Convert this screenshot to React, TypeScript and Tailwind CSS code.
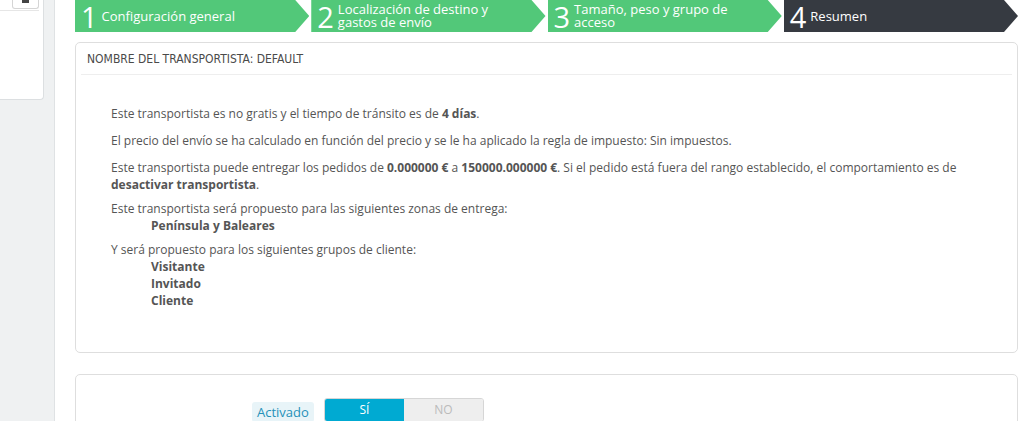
import React from "react";

const steps = [
  { num: "1", label: "Configuración general", done: true },
  { num: "2", label: "Localización de destino y gastos de envío", done: true },
  { num: "3", label: "Tamaño, peso y grupo de acceso", done: true },
  { num: "4", label: "Resumen", done: false },
];

const arrow = "[clip-path:polygon(0_0,calc(100%-14px)_0,100%_50%,calc(100%-14px)_100%,0_100%)]";

function Steps() {
  return (
    <div className="flex h-[32px] gap-[2px]">
      {steps.map((s) => (
        <div
          key={s.num}
          className={`flex flex-1 items-center pl-[6px] pr-[20px] text-white ${arrow} ${
            s.done ? "bg-[#52c879]" : "bg-[#363a41]"
          }`}
        >
          <span className="text-[29px] leading-[30px] font-normal mr-[4px] mt-[2px]">{s.num}</span>
          <span className="text-[13px] leading-[13px]">{s.label}</span>
        </div>
      ))}
    </div>
  );
}

export default function App() {
  return (
    <div
      className="flex h-[421px] w-[1034px] overflow-hidden bg-white text-[#555]"
      style={{ fontFamily: '"Open Sans", "Noto Sans", sans-serif' }}
    >
      {/* left column */}
      <div className="w-[55px] shrink-0 bg-[#eff1f2] border-r border-[#dfe2e4]">
        <div className="h-[100px] w-[44px] bg-white border-r border-b border-[#dcdfe1] rounded-br-[4px]">
          <div className="flex h-[11px] border-b border-[#e6e6e6] mr-[4px]">
            <div className="ml-[12px] w-[28px] h-[9px] border border-t-0 border-[#d5d5d5] rounded-b-[3px] flex justify-center">
              <div className="w-[7px] h-[3px] bg-[#444]" />
            </div>
          </div>
        </div>
      </div>

      {/* main */}
      <div className="flex-1 pl-[20px] pr-[16px]">
        <Steps />

        <div className="mt-[10px] h-[311px] border border-[#dedede] rounded-[5px] bg-white">
          <div className="mx-[5px] h-[32px] border-b border-[#eeeeee] flex items-center pl-[6px]">
            <h3
              className="text-[12px] uppercase text-[#4a4a4a]"
              style={{ fontFamily: '"DejaVu Sans Condensed", "DejaVu Sans", sans-serif', fontStretch: "condensed" }}
            >
              Nombre del transportista: Default
            </h3>
          </div>

          <div className="pl-[35px] pr-[30px] pt-[30px] text-[12px] leading-[17px]">
            <p className="mb-[10px]">
              Este transportista es no gratis y el tiempo de tránsito es de <b>4 días</b>.
            </p>
            <p className="mb-[10px]">
              El precio del envío se ha calculado en función del precio y se le ha aplicado la regla de impuesto: Sin impuestos.
            </p>
            <p className="mb-[7px]">
              Este transportista puede entregar los pedidos de <b>0.000000 €</b> a <b>150000.000000 €</b>. Si el pedido está fuera del rango establecido, el comportamiento es de <b>desactivar transportista</b>.
            </p>
            <p className="mb-[7px]">
              Este transportista será propuesto para las siguientes zonas de entrega:
              <br />
              <b className="pl-[40px] inline-block">Península y Baleares</b>
            </p>
            <p>
              Y será propuesto para los siguientes grupos de cliente:
            </p>
            <ul className="pl-[40px] font-bold">
              <li>Visitante</li>
              <li>Invitado</li>
              <li>Cliente</li>
            </ul>
          </div>
        </div>

        <div className="mt-[21px] h-[80px] border border-[#dedede] rounded-[5px] bg-white">
          <div className="flex items-start pt-[23px] pl-[176px]">
            <span className="mt-[4px] px-[5px] h-[20px] leading-[20px] rounded-[3px] bg-[#e8f4f8] text-[#2591b8] text-[13px]">
              Activado
            </span>
            <div className="ml-[10px] flex h-[24px] w-[160px] rounded-[3px] overflow-hidden border border-[#d6d6d6]">
              <div className="flex-1 bg-[#00aad2] text-white text-[12px] flex items-center justify-center">SÍ</div>
              <div className="flex-1 bg-[#eeeeee] text-[#bbbbbb] text-[12px] flex items-center justify-center">NO</div>
            </div>
          </div>
        </div>
      </div>
    </div>
  );
}
